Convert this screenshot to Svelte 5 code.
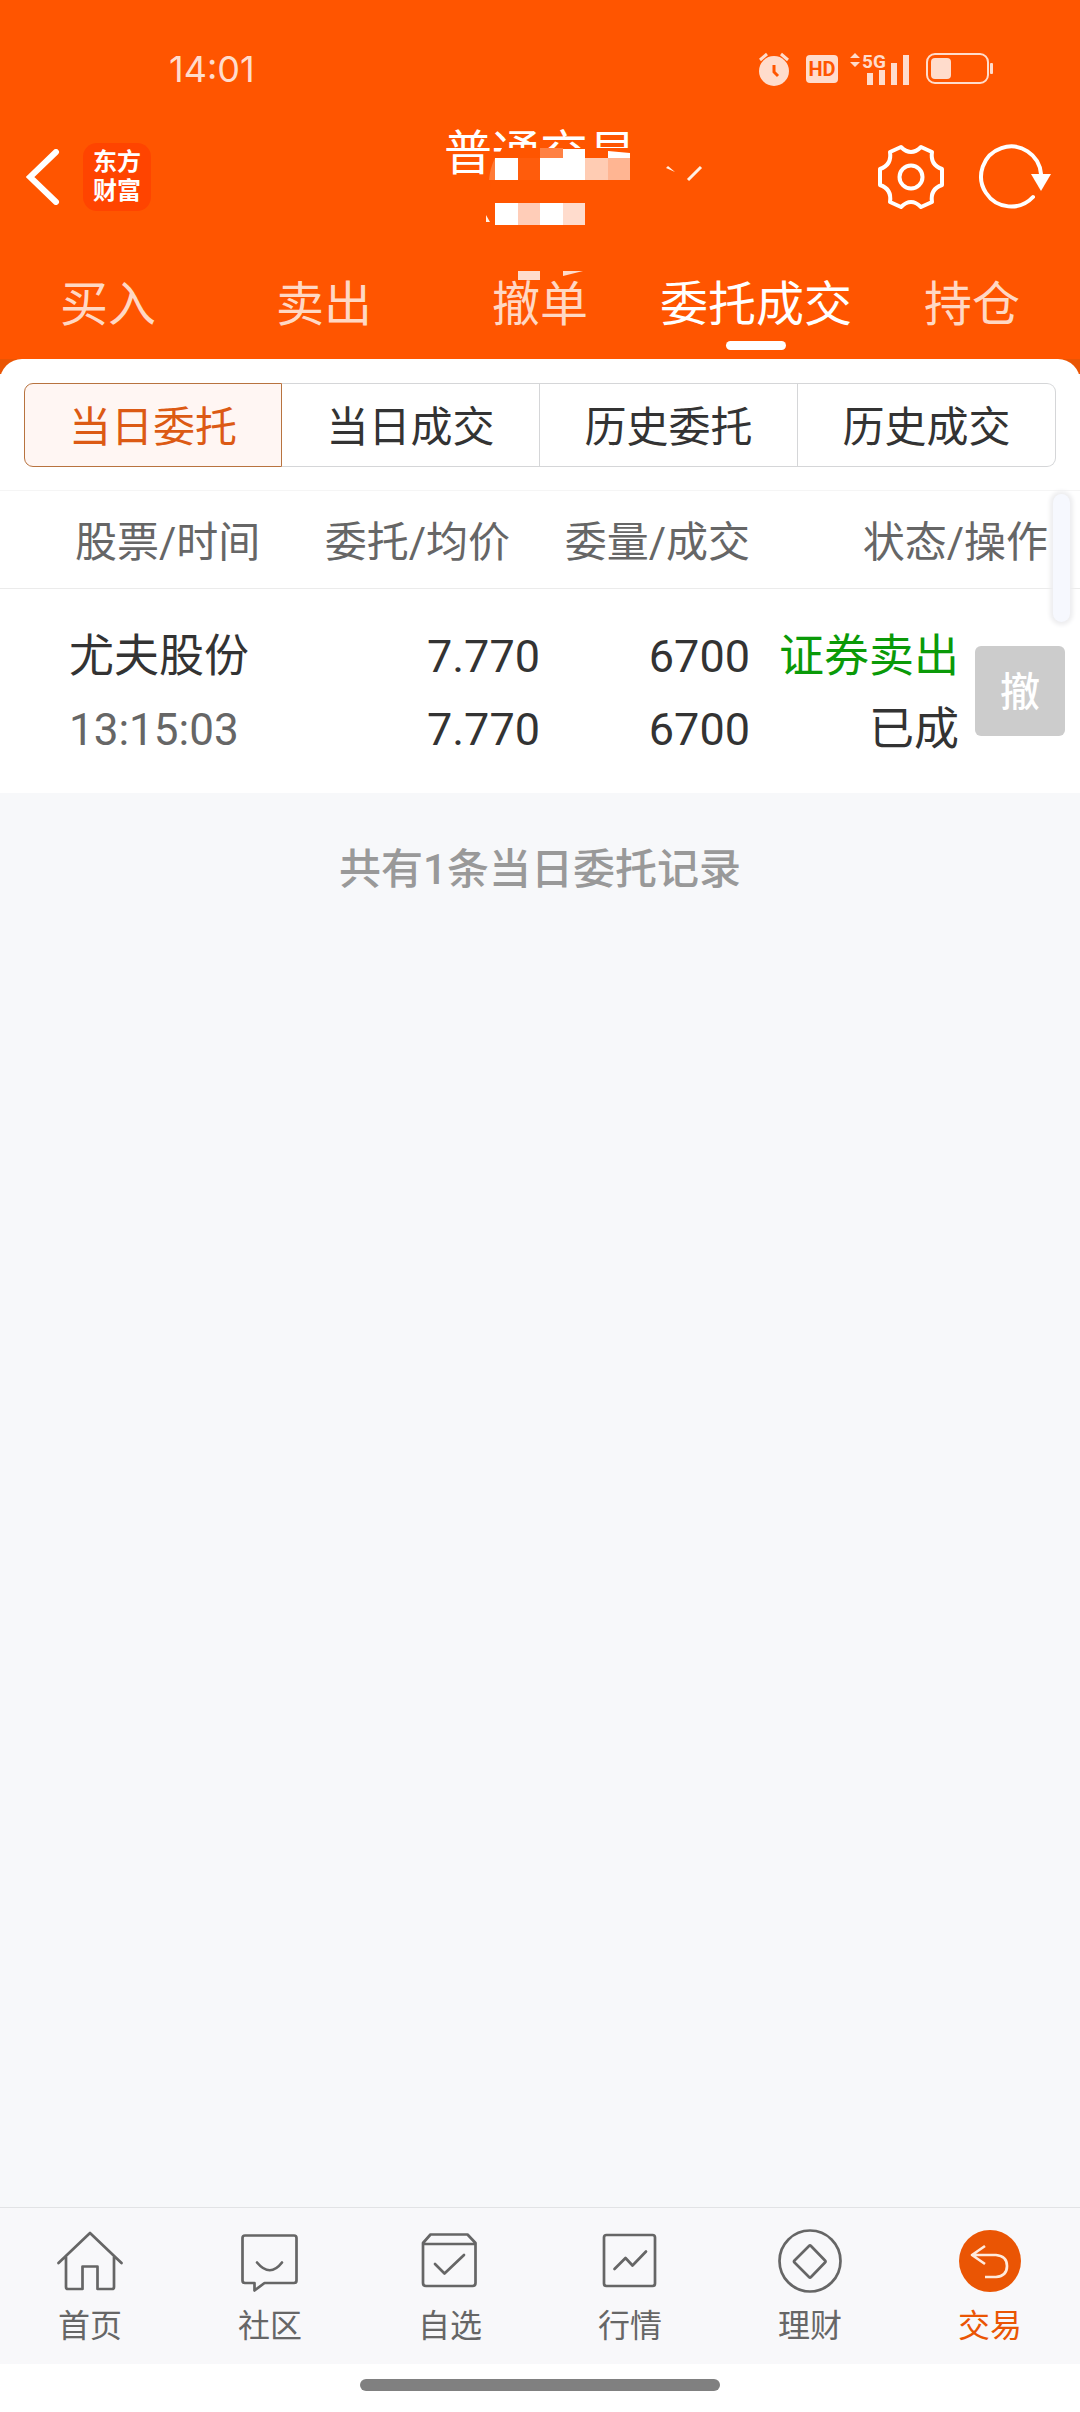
<script lang="ts">
	type Order = {
		name: string;
		time: string;
		price: string;
		avgPrice: string;
		amount: number;
		filled: number;
		side: string;
		status: string;
	};

	const tabs = ['买入', '卖出', '撤单', '委托成交', '持仓'];
	const ranges = ['当日委托', '当日成交', '历史委托', '历史成交'];
	const navItems = [
		{ id: 'home', label: '首页' },
		{ id: 'community', label: '社区' },
		{ id: 'watchlist', label: '自选' },
		{ id: 'market', label: '行情' },
		{ id: 'wealth', label: '理财' },
		{ id: 'trade', label: '交易' }
	];

	const orders: Order[] = [
		{
			name: '尤夫股份',
			time: '13:15:03',
			price: '7.770',
			avgPrice: '7.770',
			amount: 6700,
			filled: 6700,
			side: '证券卖出',
			status: '已成'
		}
	];

	let activeTab = $state('委托成交');
	let activeRange = $state('当日委托');
	let activeNav = $state('trade');
</script>

<div class="page">
	<header class="header">
		<div class="status-bar">
			<span class="clock">14:01</span>
			<div class="status-icons">
				<svg width="32" height="36" viewBox="0 0 32 36" aria-label="闹钟">
					<circle cx="16" cy="20" r="15" fill="currentColor" />
					<path d="M2 9 9 3M30 9 23 3" stroke="currentColor" stroke-width="3" />
					<path d="M16 14v7l4 4" fill="none" stroke="#ff5500" stroke-width="3" />
				</svg>
				<svg class="hd" width="32" height="28" viewBox="0 0 32 28" aria-hidden="true">
					<rect width="32" height="28" rx="4" fill="currentColor" />
					<text x="16" y="21" text-anchor="middle" class="hd-text">HD</text>
				</svg>
				<svg class="signal" width="60" height="42" viewBox="0 -4 60 42" aria-hidden="true">
					<path d="M0 6 5 1l5 5zM0 10l5 5 5-5z" fill="currentColor" />
					<text x="12" y="16" class="net-text">5G</text>
					<path d="M17 21h6v12h-6zM29 18h6v15h-6zM41 11h6v22h-6zM53 3h6v30h-6z" fill="currentColor" />
				</svg>
				<svg class="battery" width="67" height="32" viewBox="0 0 67 32" aria-label="电量">
					<rect x="1" y="1" width="61" height="29" rx="8" fill="none" stroke="currentColor" stroke-width="2" />
					<rect x="5" y="5" width="20" height="21" rx="4" fill="currentColor" />
					<rect x="64" y="10" width="3" height="11" rx="1" fill="currentColor" />
				</svg>
			</div>
		</div>

		<div class="title-bar">
			<div class="left">
				<button class="icon-button" aria-label="返回">
					<svg width="34" height="56" viewBox="0 0 34 56">
						<path d="M30 3 4 28l26 25" fill="none" stroke="currentColor" stroke-width="6" stroke-linecap="round" />
					</svg>
				</button>
				<a class="brand" href="#home">东方<br />财富</a>
			</div>

			<div class="title">
				<h1>普通交易</h1>
				<svg class="mosaic" width="280" height="160" viewBox="430 120 280 160" aria-hidden="true">
					<path d="M502 148h130v40H490q0-20 8-32z" fill="#ff5500" />
					<path d="M495 158q-5 10-6 22h6z" fill="#ff7a36" />
					<path d="M495 158h23v22h-23zM540 158h23v-9h22v31h-45zM608 151l22 2v5h-22z" fill="#fff" />
					<path d="M518 158h22v22h-22z" fill="#ff5c0c" />
					<path d="M540 148h23v10h-23z" fill="#ff8144" />
					<path d="M585 158h23v22h-23z" fill="#ffccb3" />
					<path d="M608 158h22v22h-22z" fill="#ffb592" />
					<path d="M495 203h23v22h-23zM540 203h23v22h-23z" fill="#fff" />
					<path d="M518 203h22v22h-22z" fill="#ffcdb8" />
					<path d="M563 203h22v22h-22zM518 271h22v9h-22zM563 271h20l-20 5z" fill="#ffdccd" />
					<path d="M486 215l4 7h-4zM666 168l2-2 7 6z" fill="#fff0e4" />
					<path d="M688 180l13-13" stroke="#fff0e4" stroke-width="3" />
				</svg>
			</div>

			<div class="right">
				<button class="icon-button" aria-label="设置">
					<svg width="68" height="68" viewBox="-34 -34 68 68" fill="none" stroke="currentColor" stroke-width="4" stroke-linejoin="round">
						<path d="M-10-30Q0-20 10-30L21-25Q19-12 31-8V8Q19 12 21 25L10 30Q0 20-10 30L-21 25Q-19 12-31 8V-8Q-19-12-21-25Z" />
						<circle r="11.5" />
					</svg>
				</button>
				<button class="icon-button" aria-label="刷新">
					<svg width="77" height="68" viewBox="-34 -34 77 68">
						<path d="M30-3A30 30 0 1 0 22 20" fill="none" stroke="currentColor" stroke-width="4" stroke-linecap="round" />
						<path d="M20-3h20L30 14z" fill="currentColor" />
					</svg>
				</button>
			</div>
		</div>

		<nav class="tabs">
			{#each tabs as tab}
				<button class="tab" class:active={tab === activeTab} onclick={() => (activeTab = tab)}>{tab}</button>
			{/each}
		</nav>
	</header>

	<main class="content">
		<section class="sheet">
			<div class="ranges">
				{#each ranges as range}
					<button class="range" class:active={range === activeRange} onclick={() => (activeRange = range)}>
						{range}
					</button>
				{/each}
			</div>

			<div class="orders-wrap">
				<table class="orders">
					<colgroup>
						<col />
						<col />
						<col class="col-amount" />
						<col class="col-status" />
						<col class="col-action" />
					</colgroup>
					<thead>
						<tr>
							<th class="stock">股票/时间</th>
							<th class="price">委托/均价</th>
							<th>委量/成交</th>
							<th class="status" colspan="2">状态/操作</th>
						</tr>
					</thead>
					<tbody>
						{#each orders as order}
							<tr>
								<td class="stock">{order.name}<br /><span class="time">{order.time}</span></td>
								<td>{order.price}<br />{order.avgPrice}</td>
								<td>{order.amount}<br />{order.filled}</td>
								<td><span class="sell">{order.side}</span><br />{order.status}</td>
								<td class="action"><button class="cancel" disabled>撤</button></td>
							</tr>
						{/each}
					</tbody>
				</table>
				<div class="scroll-thumb"></div>
			</div>
		</section>

		<p class="summary">共有{orders.length}条当日委托记录</p>
	</main>

	<nav class="bottom-nav">
		{#each navItems as item}
			<a class="nav-item" class:active={item.id === activeNav} href="#{item.id}" onclick={() => (activeNav = item.id)}>
				<svg width="66" height="66" viewBox="0 0 66 66" fill="none" stroke="currentColor" stroke-width="2.7" stroke-linejoin="round" stroke-linecap="round">
					{#if item.id === 'home'}
						<path d="M1.5 35 33 5l31.5 30M9 29v30q0 2 2 2h14.5V38.5h15V61H55q2 0 2-2V29" />
					{:else if item.id === 'community'}
						<path d="M8 7.5h49q2.5 0 2.5 2.5v42.5q0 2.5-2.5 2.5H27.5l-10 7.5V55H8q-2.5 0-2.5-2.5V10q0-2.5 2.5-2.5z" />
						<path d="M20 34.5q13 15.500 25 0" />
					{:else if item.id === 'watchlist'}
						<path d="M6 16h52.5M6 15l7.5-8.5h37l8 8.5v40q0 3-3 3H9q-3 0-3-3z" />
						<path d="M18 36l9.5 9.5L47 27" />
					{:else if item.id === 'market'}
						<rect x="7" y="7" width="51" height="51" rx="2.5" />
						<path d="M17.5 41 28.5 30l7 7.500L49 23.500" />
					{:else if item.id === 'wealth'}
						<circle cx="33" cy="33" r="30.5" />
						<path d="M32 18 17.500 32.500q-1 1 0 2L32 49q1 1 2 0l14-14.500q1-1 0-2L34 18q-1-1-2 0z" />
					{:else}
						<circle cx="33" cy="33" r="31" fill="currentColor" stroke="none" />
						<path d="M28 18 15 27l13 9M15 27h24q11 1 11 11t-11 11H28" stroke="#ffeadc" stroke-linecap="butt" />
					{/if}
				</svg>
				<span>{item.label}</span>
			</a>
		{/each}
	</nav>
	<footer class="gesture-bar"><div class="handle"></div></footer>
</div>

<style>
	:global(body) {
		margin: 0;
		background: #f7f8fa;
	}

	.page {
		display: flex;
		flex-direction: column;
		min-height: 100vh;
		font-family: Roboto, 'Noto Sans CJK SC', sans-serif;
		color: #333333;
		background: #f7f8fa;
	}

	button {
		margin: 0;
		padding: 0;
		border: 0;
		background: none;
		font: inherit;
		color: inherit;
		cursor: pointer;
	}

	svg {
		display: block;
		flex-shrink: 0;
	}

	.header {
		background: #ff5500;
		color: #ffffff;
	}

	.status-bar {
		display: flex;
		justify-content: space-between;
		align-items: center;
		height: 138px;
		padding: 0 87px 0 169px;
		box-sizing: border-box;
		color: #ffdccc;
	}

	.clock {
		font-family: Inter, Roboto, sans-serif;
		font-size: 36px;
		line-height: 40px;
	}

	.status-icons {
		display: flex;
		align-items: center;
		gap: 16px;
	}

	.hd-text {
		font: 700 20px Roboto, sans-serif;
		fill: #ff5500;
	}

	.net-text {
		font: 700 19px Roboto, sans-serif;
		fill: currentColor;
	}

	.signal {
		margin-left: -4px;
	}

	.title-bar {
		display: grid;
		grid-template-columns: 1fr auto 1fr;
		align-items: center;
		height: 78px;
		padding: 0 26px;
	}

	.left,
	.right {
		display: flex;
		align-items: center;
	}

	.left {
		gap: 23px;
	}

	.right {
		justify-content: flex-end;
		gap: 32px;
	}

	.brand {
		display: flex;
		align-items: center;
		justify-content: center;
		width: 68px;
		height: 68px;
		border-radius: 14px;
		background: #ff4400;
		color: #ffffff;
		font-size: 24px;
		font-weight: 700;
		line-height: 29px;
		text-decoration: none;
	}

	.title {
		position: relative;
		align-self: start;
		display: flex;
		justify-content: center;
	}

	h1 {
		margin: 0;
		font-size: 48px;
		font-weight: 400;
		line-height: 32px;
	}

	/* pixelated account number laid over the title */
	.mosaic {
		position: absolute;
		top: -18px;
		left: 50%;
		margin-left: -110px;
		z-index: 1;
	}

	.tabs {
		display: grid;
		grid-template-columns: repeat(5, 1fr);
		height: 143px;
	}

	.tab {
		display: flex;
		flex-direction: column;
		align-items: center;
		padding-top: 54px;
		font-size: 48px;
		line-height: 70px;
		white-space: nowrap;
		color: #ffd8c4;
	}

	.tab.active {
		color: #ffffff;
	}

	.tab.active::after {
		content: '';
		width: 60px;
		height: 9px;
		margin-top: 1px;
		border-radius: 5px;
		background: #ffffff;
	}

	.content {
		flex: 1;
		background: linear-gradient(#ea5504 15px, transparent 15px);
	}

	.sheet {
		padding-top: 24px;
		border-radius: 22px 22px 0 0;
		background: #ffffff;
	}

	.ranges {
		display: grid;
		grid-template-columns: repeat(4, 1fr);
		margin: 0 24px 23px;
	}

	.range {
		height: 84px;
		padding-bottom: 3px;
		border: 1px solid #d5d6d8;
		border-left-width: 0;
		font-size: 42px;
	}

	.range:first-child {
		border-left-width: 1px;
		border-radius: 9px 0 0 9px;
	}

	.range:last-child {
		border-radius: 0 9px 9px 0;
	}

	.range.active {
		border: 1px solid #b8733f;
		background: #fff6f3;
		color: #dc5a14;
	}

	.orders-wrap {
		position: relative;
	}

	.orders {
		width: 100%;
		table-layout: fixed;
		border-collapse: collapse;
	}

	.col-amount {
		width: 210px;
	}

	.col-status {
		width: 209px;
	}

	.col-action {
		width: 121px;
	}

	th,
	td {
		padding: 0;
		text-align: right;
		white-space: nowrap;
	}

	th {
		height: 94px;
		padding-bottom: 3px;
		border-top: 1px solid #f5f5f5;
		border-bottom: 1px solid #ebebeb;
		font-size: 42px;
		font-weight: 400;
		color: #666666;
	}

	th.stock {
		padding-left: 75px;
	}

	th.price {
		padding-right: 30px;
	}

	th.status {
		padding-right: 32px;
	}

	td {
		height: 200px;
		padding-top: 4px;
		font-size: 45px;
		line-height: 73px;
	}

	.stock {
		text-align: left;
	}

	td.stock {
		padding-left: 69px;
	}

	.time {
		font-size: 44px;
		color: #666666;
	}

	.sell {
		color: #0a9a08;
	}

	td.action {
		padding: 2px 15px 2px 0;
	}

	.cancel {
		display: block;
		width: 90px;
		height: 90px;
		padding-top: 3px;
		margin-left: auto;
		border-radius: 6px;
		background: #cccccc;
		color: #ffffff;
		font-size: 40px;
		font-weight: 500;
		line-height: 60px;
	}

	.scroll-thumb {
		position: absolute;
		top: 4px;
		right: 10px;
		width: 17px;
		height: 128px;
		border-radius: 9px;
		background: #f6f8fe;
		box-shadow: 0 0 4px 3px #ededef;
	}

	.summary {
		margin: 47px 0 0;
		text-align: center;
		font-size: 42px;
		font-weight: 500;
		line-height: 60px;
		color: #999999;
	}

	.bottom-nav {
		display: grid;
		grid-template-columns: repeat(6, 1fr);
		height: 156px;
		border-top: 1px solid #e2e3e5;
		background: #f8f8fa;
	}

	.nav-item {
		display: flex;
		flex-direction: column;
		align-items: center;
		gap: 10px;
		padding-top: 20px;
		font-size: 32px;
		line-height: 44px;
		color: #666666;
		text-decoration: none;
	}

	.nav-item.active {
		color: #ea5504;
	}

	.gesture-bar {
		display: flex;
		justify-content: center;
		height: 33px;
		padding-top: 15px;
		background: #ffffff;
	}

	.handle {
		width: calc(100% / 3);
		height: 12px;
		border-radius: 6px;
		background: #808080;
	}
</style>
